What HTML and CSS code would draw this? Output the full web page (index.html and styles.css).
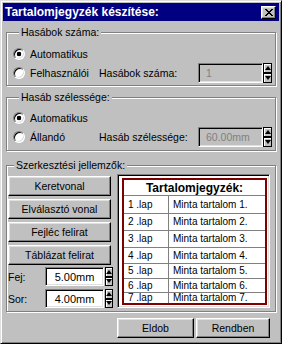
FILE: index.html
```html
<!DOCTYPE html>
<html lang="hu">
<head>
<meta charset="utf-8">
<title>Tartalomjegyzék készítése</title>
<link rel="stylesheet" href="styles.css">
</head>
<body>
<div class="dialog">
  <div class="titlebar">
    <span class="title">Tartalomjegyzék készítése:</span>
    <span class="close"><svg width="8" height="7" viewBox="0 0 8 7" shape-rendering="crispEdges"><path d="M0 0h2v1H0zM6 0h2v1H6zM1 1h2v1H1zM5 1h2v1H5zM2 2h4v1H2zM3 3h2v1H3zM2 4h4v1H2zM1 5h2v1H1zM5 5h2v1H5zM0 6h2v1H0zM6 6h2v1H6z"/></svg></span>
  </div>
  <div class="content">
    <fieldset class="group g1">
      <legend>Hasábok száma:</legend>
      <div class="row r-a"><span class="radio checked"></span><span class="rlabel">Automatikus</span></div>
      <div class="row r-b">
        <span class="opt"><span class="radio"></span><span class="rlabel">Felhasználói</span></span>
        <span class="lbl">Hasábok száma:</span>
        <span class="spinfield">
          <span class="field disabled wide">1</span>
          <span class="spinner"><span class="sp up"></span><span class="sp down"></span></span>
        </span>
      </div>
    </fieldset>

    <fieldset class="group g2">
      <legend>Hasáb szélessége:</legend>
      <div class="row r-a"><span class="radio checked"></span><span class="rlabel">Automatikus</span></div>
      <div class="row r-b">
        <span class="opt"><span class="radio"></span><span class="rlabel">Állandó</span></span>
        <span class="lbl">Hasáb szélessége:</span>
        <span class="spinfield">
          <span class="field disabled wide">60.00mm</span>
          <span class="spinner"><span class="sp up"></span><span class="sp down"></span></span>
        </span>
      </div>
    </fieldset>

    <fieldset class="group g3">
      <legend>Szerkesztési jellemzők:</legend>
      <div class="g3body">
        <div class="leftcol">
          <span class="btn side">Keretvonal</span>
          <span class="btn side">Elválasztó vonal</span>
          <span class="btn side">Fejléc felirat</span>
          <span class="btn side">Táblázat felirat</span>
          <div class="inrow first">
            <span class="inlbl">Fej:</span>
            <span class="field small">5.00mm</span>
            <span class="spinner"><span class="sp up"></span><span class="sp down"></span></span>
          </div>
          <div class="inrow">
            <span class="inlbl">Sor:</span>
            <span class="field small">4.00mm</span>
            <span class="spinner"><span class="sp up"></span><span class="sp down"></span></span>
          </div>
        </div>
        <div class="preview">
          <div class="toc">
            <div class="toc-head">Tartalomjegyzék:</div>
            <div class="c1">1 .lap</div><div class="c2">Minta tartalom 1.</div>
            <div class="c1">2 .lap</div><div class="c2">Minta tartalom 2.</div>
            <div class="c1">3 .lap</div><div class="c2">Minta tartalom 3.</div>
            <div class="c1">4 .lap</div><div class="c2">Minta tartalom 4.</div>
            <div class="c1">5 .lap</div><div class="c2">Minta tartalom 5.</div>
            <div class="c1">6 .lap</div><div class="c2">Minta tartalom 6.</div>
            <div class="c1">7 .lap</div><div class="c2">Minta tartalom 7.</div>
          </div>
        </div>
      </div>
    </fieldset>

    <div class="footer">
      <span class="btn eldob">Eldob</span>
      <span class="btn rendben">Rendben</span>
    </div>
  </div>
</div>
</body>
</html>
```

FILE: styles.css
```css
* { box-sizing: border-box; }
html, body { margin: 0; padding: 0; }
body {
  width: 282px;
  height: 344px;
  overflow: hidden;
  background: #c0c0c0;
  font-family: "Liberation Sans", Arial, sans-serif;
  font-size: 10.5px;
  color: #000;
}
.dialog {
  width: 282px;
  height: 344px;
  background: #c0c0c0;
  border: 1px solid;
  border-color: #dfdfdf #000 #000 #dfdfdf;
  box-shadow: inset 1px 1px #fff, inset -1px -1px #808080;
  padding: 2px;
  display: flex;
  flex-direction: column;
}
.titlebar {
  height: 18px;
  flex: none;
  background: #000080;
  color: #fff;
  display: flex;
  align-items: center;
  justify-content: space-between;
  padding: 0 3px 0 2px;
}
.title {
  font-weight: bold;
  font-size: 12px;
  line-height: 14px;
  white-space: nowrap;
}
.close {
  width: 15px;
  height: 13px;
  background: #c0c0c0;
  border: 1px solid;
  border-color: #fff #000 #000 #fff;
  box-shadow: inset -1px -1px #808080, inset 1px 1px #dfdfdf;
  display: flex;
  align-items: center;
  justify-content: center;
}
.close svg { display: block; fill: #000; }
.content {
  flex: 1;
  display: flex;
  flex-direction: column;
  padding: 0 3px;
}
.group {
  margin: 0;
  padding: 0;
  width: 270px;
  min-width: 0;
  border: 1px solid #808080;
  box-shadow: inset 1px 1px #fff, 1px 1px #fff;
}
.group legend {
  margin-left: 6px;
  padding: 0 2px;
  height: 12px;
  line-height: 12px;
  background: #c0c0c0;
  white-space: nowrap;
}
.g1 { margin-top: 5px; padding: 6px 3px 2px 6px; }
.g2 { margin-top: 5px; padding: 5px 3px 3px 6px; }
.g3 { margin-top: 8px; padding: 3px 5px 3px 1px; }
.row { display: flex; align-items: center; }
.r-a { height: 19px; }
.r-b { height: 20px; }
.radio {
  flex: none;
  width: 12px;
  height: 12px;
  border-radius: 50%;
  border: 1px solid;
  border-color: #808080 #fff #fff #808080;
  box-shadow: inset 1px 1px #000, inset -1px -1px #dfdfdf;
  background: #fff;
}
.radio.checked { background: radial-gradient(circle, #000 0 2px, #fff 2.6px); }
.rlabel { margin-left: 5px; white-space: nowrap; }
.opt { display: flex; align-items: center; width: 86px; flex: none; }
.lbl { white-space: nowrap; }
.spinfield { margin-left: auto; display: flex; align-items: stretch; height: 20px; }
.field {
  display: flex;
  align-items: center;
  background: #fff;
  border: 1px solid;
  border-color: #808080 #fff #fff #808080;
  box-shadow: inset 1px 1px #000, inset -1px -1px #dfdfdf;
  white-space: nowrap;
}
.field.wide { width: 65px; padding-left: 7px; }
.field.disabled { background: #c0c0c0; color: #808080; }
.field.small { width: 59px; justify-content: center; font-size: 11px; }
.spinner {
  width: 9px;
  display: flex;
  flex-direction: column;
  flex: none;
}
.sp {
  flex: 1;
  background: #c0c0c0;
  border: 1px solid #000;
  box-shadow: inset 1px 1px #fff;
  display: flex;
  align-items: center;
  justify-content: center;
}
.sp::before {
  content: "";
  width: 0;
  height: 0;
  border-left: 3px solid transparent;
  border-right: 3px solid transparent;
}
.up::before { border-bottom: 4px solid #000; }
.down::before { border-top: 4px solid #000; }
.g3body { display: flex; gap: 3px; }
.leftcol {
  width: 106px;
  flex: none;
  display: flex;
  flex-direction: column;
  gap: 3px;
  padding-top: 2px;
}
.btn {
  display: flex;
  align-items: center;
  justify-content: center;
  height: 20px;
  background: #c0c0c0;
  border: 1px solid;
  border-color: #fff #000 #000 #fff;
  box-shadow: inset -1px -1px #808080, inset 1px 1px #dfdfdf;
  white-space: nowrap;
}
.btn.side { width: 103px; }
.inrow { display: flex; height: 19px; align-items: stretch; }
.inrow.first { margin-top: -1px; }
.inlbl { width: 37px; display: flex; align-items: center; }
.inrow .spinner { margin-left: 1px; width: 8px; }
.preview {
  width: 153px;
  height: 134px;
  background: #fff;
  border: 1px solid;
  border-color: #808080 #fff #fff #808080;
  box-shadow: inset 1px 1px #000, inset -1px -1px #dfdfdf;
  padding: 3px 2px 2px 4px;
}
.toc {
  height: 127px;
  border: 2px solid #800000;
  display: grid;
  grid-template-columns: 45px 1fr;
  grid-template-rows: 15px 18px 17px 17px 16px 15px 14px 11px;
  font-size: 10px;
}
.toc-head {
  grid-column: 1 / -1;
  display: flex;
  align-items: center;
  justify-content: center;
  font-weight: bold;
  font-size: 12px;
  line-height: 14px;
}
.c1, .c2 {
  border-top: 1px solid #808080;
  display: flex;
  align-items: center;
  white-space: nowrap;
  overflow: hidden;
  line-height: 10px;
}
.c1 { border-right: 1px solid #808080; padding-left: 4px; }
.c2 { padding-left: 4px; }
.footer {
  display: flex;
  justify-content: flex-end;
  gap: 2px;
  margin-top: 6px;
  padding-right: 6px;
}
.eldob { width: 77px; }
.rendben { width: 74px; }
```
